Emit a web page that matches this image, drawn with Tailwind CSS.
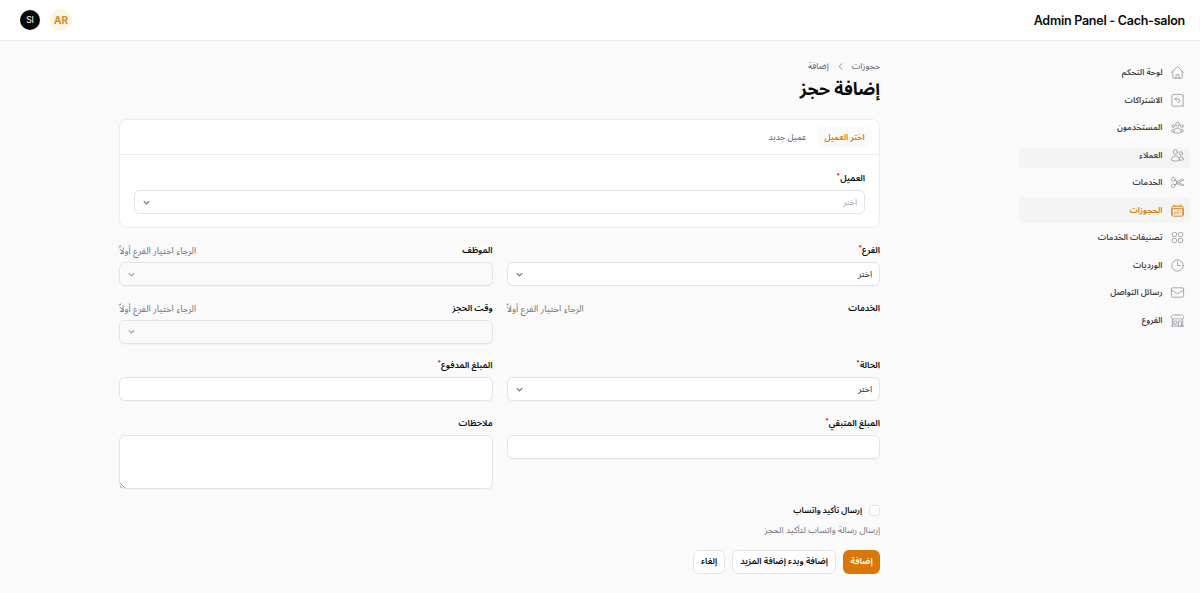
<!doctype html>
<html lang="ar" dir="rtl">
<head>
  <meta charset="UTF-8">
  <meta name="viewport" content="width=device-width, initial-scale=1.0">
  <title>إضافة حجز - Cach-salon</title>
  <script src="https://cdn.jsdelivr.net/npm/@tailwindcss/browser@4"></script>
</head>

<body class="bg-[#fafafa] h-screen overflow-hidden text-[8.75px] leading-[15px] text-zinc-950 font-['Inter','Noto_Sans_Arabic','Noto_Sans',sans-serif]">

  <!-- Topbar -->
  <header class="h-10 bg-white flex items-center justify-between pr-[15px] pl-5 shadow-[0_1px_1px_rgba(0,0,0,0.06)]">
    <div dir="ltr" class="text-[12.5px] font-semibold tracking-[-0.02em] whitespace-nowrap">Admin Panel - Cach-salon</div>
    <div class="flex items-center gap-2.5">
      <div class="size-[22px] rounded-full bg-[#fff5e6] text-[#d98a1c] text-[10px] font-bold flex items-center justify-center">AR</div>
      <div class="size-5 rounded-full bg-zinc-950 text-white text-[8.5px] tracking-tight flex items-center justify-center">SI</div>
    </div>
  </header>

  <div class="flex">
    <!-- Sidebar -->
    <nav class="w-[200px] shrink-0 pt-5 pr-2.5 pl-[19px] flex flex-col gap-[2.5px] text-[8.3px] font-semibold text-zinc-700">
      <a class="h-[25px] px-[5px] flex items-center gap-[7.5px] rounded-sm">
        <svg class="size-[15px] text-zinc-400" fill="none" viewBox="0 0 24 24" stroke-width="1.5" stroke="currentColor" stroke-linecap="round" stroke-linejoin="round"><path d="m2.25 12 8.954-8.955c.44-.439 1.152-.439 1.591 0L21.75 12M4.5 9.75v10.125c0 .621.504 1.125 1.125 1.125H9.75v-4.875c0-.621.504-1.125 1.125-1.125h2.25c.621 0 1.125.504 1.125 1.125V21h4.125c.621 0 1.125-.504 1.125-1.125V9.75M8.25 21h8.25"/></svg>
        <span>لوحة التحكم</span>
      </a>
      <a class="h-[25px] px-[5px] flex items-center gap-[7.5px] rounded-sm">
        <svg class="size-[15px] text-zinc-400" fill="none" viewBox="0 0 24 24" stroke-width="1.5" stroke="currentColor" stroke-linecap="round" stroke-linejoin="round"><path d="M8.25 9.75h4.875a2.625 2.625 0 0 1 0 5.25H12M8.25 9.75 10.5 7.5M8.25 9.75 10.5 12m10.5-7.243V21.75l-3.75-1.5-3.75 1.5-3-1.5-3.75 1.5L3 20.25V4.757c0-1.108.806-2.057 1.907-2.185a56 56 0 0 1 14.186 0c1.1.128 1.907 1.077 1.907 2.185Z"/></svg>
        <span>الاشتراكات</span>
      </a>
      <a class="h-[25px] px-[5px] flex items-center gap-[7.5px] rounded-sm">
        <svg class="size-[15px] text-zinc-400" fill="none" viewBox="0 0 24 24" stroke-width="1.5" stroke="currentColor" stroke-linecap="round" stroke-linejoin="round"><path d="M18 18.72a9.094 9.094 0 0 0 3.741-.479 3 3 0 0 0-4.682-2.72m.94 3.198.001.031c0 .225-.012.447-.037.666A11.944 11.944 0 0 1 12 21c-2.17 0-4.207-.576-5.963-1.584A6.062 6.062 0 0 1 6 18.719m12 0a5.971 5.971 0 0 0-.941-3.197m0 0A5.995 5.995 0 0 0 12 12.75a5.995 5.995 0 0 0-5.058 2.772m0 0a3 3 0 0 0-4.681 2.72 8.986 8.986 0 0 0 3.74.477m.94-3.197a5.971 5.971 0 0 0-.94 3.197M15 6.75a3 3 0 1 1-6 0 3 3 0 0 1 6 0Zm6 3a2.25 2.25 0 1 1-4.5 0 2.25 2.25 0 0 1 4.5 0Zm-13.5 0a2.25 2.25 0 1 1-4.5 0 2.25 2.25 0 0 1 4.5 0Z"/></svg>
        <span>المستخدمون</span>
      </a>
      <a class="h-[25px] px-[5px] flex items-center gap-[7.5px] rounded-sm bg-linear-to-b from-transparent from-22% to-zinc-100 to-22%">
        <svg class="size-[15px] text-zinc-400" fill="none" viewBox="0 0 24 24" stroke-width="1.5" stroke="currentColor" stroke-linecap="round" stroke-linejoin="round"><path d="M15 19.128a9.38 9.38 0 0 0 2.625.372 9.337 9.337 0 0 0 4.121-.952 4.125 4.125 0 0 0-7.533-2.493M15 19.128v-.003c0-1.113-.285-2.16-.786-3.07M15 19.128v.106A12.318 12.318 0 0 1 8.624 21c-2.331 0-4.512-.645-6.374-1.766l-.001-.109a6.375 6.375 0 0 1 11.964-3.07M12 6.375a3.375 3.375 0 1 1-6.75 0 3.375 3.375 0 0 1 6.75 0Zm8.25 2.25a2.625 2.625 0 1 1-5.25 0 2.625 2.625 0 0 1 5.25 0Z"/></svg>
        <span>العملاء</span>
      </a>
      <a class="h-[25px] px-[5px] flex items-center gap-[7.5px] rounded-sm">
        <svg class="size-[15px] text-zinc-400" fill="none" viewBox="0 0 24 24" stroke-width="1.5" stroke="currentColor" stroke-linecap="round" stroke-linejoin="round"><path d="m7.848 8.25 1.536.887M7.848 8.25a3 3 0 1 1-5.196-3 3 3 0 0 1 5.196 3Zm1.536.887a2.165 2.165 0 0 1 1.083 1.839c.005.351.054.695.14 1.024M9.384 9.137l2.077 1.199M7.848 15.75l1.536-.887m-1.536.887a3 3 0 1 1-5.196 3 3 3 0 0 1 5.196-3Zm1.536-.887a2.165 2.165 0 0 0 1.083-1.838c.005-.352.054-.695.14-1.025m-1.223 2.863 2.077-1.199m0-3.328a4.323 4.323 0 0 1 2.068-1.379l5.325-1.628a4.5 4.5 0 0 1 2.48-.044l.803.215-7.794 4.5m-2.882-1.664A4.33 4.33 0 0 0 10.607 12m3.736 0 7.794 4.5-.802.215a4.5 4.5 0 0 1-2.48-.043l-5.326-1.629a4.324 4.324 0 0 1-2.068-1.379M14.343 12l-2.882 1.664"/></svg>
        <span>الخدمات</span>
      </a>
      <a class="h-[25px] px-[5px] flex items-center gap-[7.5px] rounded-sm bg-zinc-100 text-[#d97706]">
        <svg class="size-[15px]" fill="none" viewBox="0 0 24 24" stroke-width="1.5" stroke="currentColor" stroke-linecap="round" stroke-linejoin="round"><path d="M6.75 3v2.25M17.25 3v2.25M3 18.75V7.5a2.25 2.25 0 0 1 2.25-2.25h13.5A2.25 2.25 0 0 1 21 7.5v11.25m-18 0A2.25 2.25 0 0 0 5.25 21h13.5A2.25 2.25 0 0 0 21 18.75m-18 0v-7.5A2.25 2.25 0 0 1 5.25 9h13.5A2.25 2.25 0 0 1 21 11.25v7.5"/><path stroke-width="1" d="M12 12.75h.008v.008H12v-.008ZM12 15h.008v.008H12V15Zm0 2.25h.008v.008H12v-.008ZM9.75 15h.008v.008H9.75V15Zm0 2.25h.008v.008H9.75v-.008ZM7.5 15h.008v.008H7.5V15Zm0 2.25h.008v.008H7.5v-.008Zm6.75-4.5h.008v.008h-.008v-.008Zm0 2.25h.008v.008h-.008V15Zm0 2.25h.008v.008h-.008v-.008Zm2.25-4.5h.008v.008H16.5v-.008Zm0 2.25h.008v.008H16.5V15Z"/></svg>
        <span>الحجوزات</span>
      </a>
      <a class="h-[25px] px-[5px] flex items-center gap-[7.5px] rounded-sm">
        <svg class="size-[15px] text-zinc-400" fill="none" viewBox="0 0 24 24" stroke-width="1.5" stroke="currentColor" stroke-linecap="round" stroke-linejoin="round"><path d="M3.75 6A2.25 2.25 0 0 1 6 3.75h2.25A2.25 2.25 0 0 1 10.5 6v2.25a2.25 2.25 0 0 1-2.25 2.25H6a2.25 2.25 0 0 1-2.25-2.25V6ZM3.75 15.75A2.25 2.25 0 0 1 6 13.5h2.25a2.25 2.25 0 0 1 2.25 2.25V18a2.25 2.25 0 0 1-2.25 2.25H6A2.25 2.25 0 0 1 3.75 18v-2.25ZM13.5 6a2.25 2.25 0 0 1 2.25-2.25H18A2.25 2.25 0 0 1 20.25 6v2.25A2.25 2.25 0 0 1 18 10.5h-2.25a2.25 2.25 0 0 1-2.25-2.25V6ZM13.5 15.75a2.25 2.25 0 0 1 2.25-2.25H18a2.25 2.25 0 0 1 2.25 2.25V18A2.25 2.25 0 0 1 18 20.25h-2.25A2.25 2.25 0 0 1 13.5 18v-2.25Z"/></svg>
        <span>تصنيفات الخدمات</span>
      </a>
      <a class="h-[25px] px-[5px] flex items-center gap-[7.5px] rounded-sm">
        <svg class="size-[15px] text-zinc-400" fill="none" viewBox="0 0 24 24" stroke-width="1.5" stroke="currentColor" stroke-linecap="round" stroke-linejoin="round"><path d="M12 6v6h4.5m4.5 0a9 9 0 1 1-18 0 9 9 0 0 1 18 0Z"/></svg>
        <span>الورديات</span>
      </a>
      <a class="h-[25px] px-[5px] flex items-center gap-[7.5px] rounded-sm">
        <svg class="size-[15px] text-zinc-400" fill="none" viewBox="0 0 24 24" stroke-width="1.5" stroke="currentColor" stroke-linecap="round" stroke-linejoin="round"><path d="M21.75 6.75v10.5a2.25 2.25 0 0 1-2.25 2.25h-15a2.25 2.25 0 0 1-2.25-2.25V6.75m19.5 0A2.25 2.25 0 0 0 19.5 4.5h-15a2.25 2.25 0 0 0-2.25 2.25m19.5 0v.243a2.25 2.25 0 0 1-1.07 1.916l-7.5 4.615a2.25 2.25 0 0 1-2.36 0L3.32 8.91a2.25 2.25 0 0 1-1.07-1.916V6.75"/></svg>
        <span>رسائل التواصل</span>
      </a>
      <a class="h-[25px] px-[5px] flex items-center gap-[7.5px] rounded-sm">
        <svg class="size-[15px] text-zinc-400" fill="none" viewBox="0 0 24 24" stroke-width="1.5" stroke="currentColor" stroke-linecap="round" stroke-linejoin="round"><path d="M13.5 21v-7.5a.75.75 0 0 1 .75-.75h3a.75.75 0 0 1 .75.75V21m-4.5 0H2.36m11.14 0H18m0 0h3.64m-1.39 0V9.349M3.75 21V9.349m0 0a3.001 3.001 0 0 0 3.75-.615A2.993 2.993 0 0 0 9.75 9.75c.896 0 1.7-.393 2.25-1.016a2.993 2.993 0 0 0 2.25 1.016c.896 0 1.7-.393 2.25-1.015a3.001 3.001 0 0 0 3.75.614m-16.5 0a3.004 3.004 0 0 1-.621-4.72l1.189-1.19A1.5 1.5 0 0 1 5.378 3h13.243a1.5 1.5 0 0 1 1.06.44l1.19 1.189a3 3 0 0 1-.621 4.72M6.75 18h3.75a.75.75 0 0 0 .75-.75V13.5a.75.75 0 0 0-.75-.75H6.75a.75.75 0 0 0-.75.75v3.75c0 .414.336.75.75.75Z"/></svg>
        <span>الفروع</span>
      </a>
    </nav>

    <!-- Page -->
    <main class="w-[761px] mr-[119.9px] pt-[19px]">
      <div class="flex items-center gap-[5px] text-[8.5px] text-zinc-500 font-medium">
        <span>حجوزات</span>
        <svg class="size-[13px] text-zinc-400" viewBox="0 0 20 20" fill="currentColor"><path d="M12.79 5.23a.75.75 0 0 1-.02 1.06L8.832 10l3.938 3.71a.75.75 0 1 1-1.04 1.08l-4.5-4.25a.75.75 0 0 1 0-1.08l4.5-4.25a.75.75 0 0 1 1.06.02Z"/></svg>
        <span>إضافة</span>
      </div>
      <h1 class="mt-[3px] h-[23px] text-[17.5px] leading-[23px] font-bold">إضافة حجز</h1>

      <form class="mt-[19px]">
        <section class="h-[109px] bg-white rounded-lg border border-[#ededef]">
          <div class="h-[35px] px-[7px] flex items-center gap-[3px] border-b border-[#ededef] text-[8.4px] font-semibold text-zinc-500">
            <div class="h-[22px] px-[7.5px] flex items-center rounded-md bg-zinc-50 text-[#d97706]">اختر العميل</div>
            <div class="h-[22px] px-[7.5px] flex items-center font-medium">عميل جديد</div>
          </div>
          <div class="px-[14px] pt-4">
            <label class="block font-semibold">العميل<sup class="text-red-600">*</sup></label>
            <div class="mt-1 h-6 px-[7px] flex items-center justify-between border border-zinc-200 rounded-md text-zinc-400">
              <span>اختر</span>
              <svg class="size-[9px] text-zinc-500" viewBox="0 0 20 20" fill="none" stroke="currentColor" stroke-width="2.5"><path d="m4 7 6 6 6-6"/></svg>
            </div>
          </div>
        </section>

        <div class="mt-[15.4px] grid grid-cols-2 gap-x-[14px] gap-y-[15px]">
          <div class="h-[42.5px]">
            <label class="block font-semibold">الفرع<sup class="text-red-600">*</sup></label>
            <div class="mt-1 h-6 px-[7px] flex items-center justify-between bg-white border border-zinc-200 rounded-md shadow-[0_1px_1px_rgba(0,0,0,0.03)]">
              <span class="text-zinc-800">اختر</span>
              <svg class="size-[9px] text-zinc-500" viewBox="0 0 20 20" fill="none" stroke="currentColor" stroke-width="2.5"><path d="m4 7 6 6 6-6"/></svg>
            </div>
          </div>
          <div class="h-[42.5px]">
            <div class="flex justify-between">
              <label class="font-semibold">الموظف</label>
              <span class="text-[9.2px] text-zinc-500">الرجاء اختيار الفرع أولاً</span>
            </div>
            <div class="mt-1 h-6 px-[7px] flex items-center justify-end bg-zinc-50 border border-zinc-200 rounded-md shadow-[0_1px_1px_rgba(0,0,0,0.03)]">
              <svg class="size-[9px] text-zinc-400" viewBox="0 0 20 20" fill="none" stroke="currentColor" stroke-width="2.5"><path d="m4 7 6 6 6-6"/></svg>
            </div>
          </div>
          <div class="h-[42.5px]">
            <div class="flex justify-between">
              <label class="font-semibold">الخدمات</label>
              <span class="text-[9.2px] text-zinc-500">الرجاء اختيار الفرع أولاً</span>
            </div>
          </div>
          <div class="h-[42.5px]">
            <div class="flex justify-between">
              <label class="font-semibold">وقت الحجز</label>
              <span class="text-[9.2px] text-zinc-500">الرجاء اختيار الفرع أولاً</span>
            </div>
            <div class="mt-1 h-6 px-[7px] flex items-center justify-end bg-zinc-50 border border-zinc-200 rounded-md shadow-[0_1px_1px_rgba(0,0,0,0.03)]">
              <svg class="size-[9px] text-zinc-400" viewBox="0 0 20 20" fill="none" stroke="currentColor" stroke-width="2.5"><path d="m4 7 6 6 6-6"/></svg>
            </div>
          </div>
          <div class="h-[42.5px]">
            <label class="block font-semibold">الحالة<sup class="text-red-600">*</sup></label>
            <div class="mt-1 h-6 px-[7px] flex items-center justify-between bg-white border border-zinc-200 rounded-md shadow-[0_1px_1px_rgba(0,0,0,0.03)]">
              <span class="text-zinc-800">اختر</span>
              <svg class="size-[9px] text-zinc-500" viewBox="0 0 20 20" fill="none" stroke="currentColor" stroke-width="2.5"><path d="m4 7 6 6 6-6"/></svg>
            </div>
          </div>
          <div class="h-[42.5px]">
            <label class="block font-semibold">المبلغ المدفوع<sup class="text-red-600">*</sup></label>
            <input type="text" class="block w-full mt-1 h-6 bg-white border border-zinc-200 rounded-md shadow-[0_1px_1px_rgba(0,0,0,0.03)]">
          </div>
          <div class="h-[73px]">
            <label class="block font-semibold">المبلغ المتبقي<sup class="text-red-600">*</sup></label>
            <input type="text" class="block w-full mt-1 h-6 bg-white border border-zinc-200 rounded-md shadow-[0_1px_1px_rgba(0,0,0,0.03)]">
          </div>
          <div class="h-[73px]">
            <label class="block font-semibold">ملاحظات</label>
            <!-- own grip, smaller than the browser's -->
            <div class="relative mt-1">
              <textarea class="block w-full h-[54px] resize-none bg-white border border-zinc-200 rounded-md shadow-[0_1px_1px_rgba(0,0,0,0.03)]"></textarea>
              <svg class="absolute left-px bottom-px size-[5px] text-zinc-500" viewBox="0 0 5 5" fill="none" stroke="currentColor" stroke-width=".7"><path d="m0 0 5 5M0 3l2 2"/></svg>
            </div>
          </div>
        </div>

        <div class="mt-[14.5px] flex items-center gap-[7px]">
          <input type="checkbox" class="appearance-none size-[11px] bg-white border border-zinc-200 rounded-[3px]">
          <label class="text-[8.2px] font-semibold">إرسال تأكيد واتساب</label>
        </div>
        <p class="mt-[3.5px] text-[8.8px] text-zinc-500">إرسال رسالة واتساب لتأكيد الحجز</p>

        <div class="mt-[13px] flex gap-[7px] font-semibold">
          <button class="h-6 w-[37px] rounded-md bg-[#d97706] text-white whitespace-nowrap">إضافة</button>
          <button class="h-6 w-[104px] rounded-md bg-white border border-zinc-200 whitespace-nowrap">إضافة وبدء إضافة المزيد</button>
          <button class="h-6 w-8 rounded-md bg-white border border-zinc-200 whitespace-nowrap">إلغاء</button>
        </div>
      </form>
    </main>
  </div>

</body>

</html>
